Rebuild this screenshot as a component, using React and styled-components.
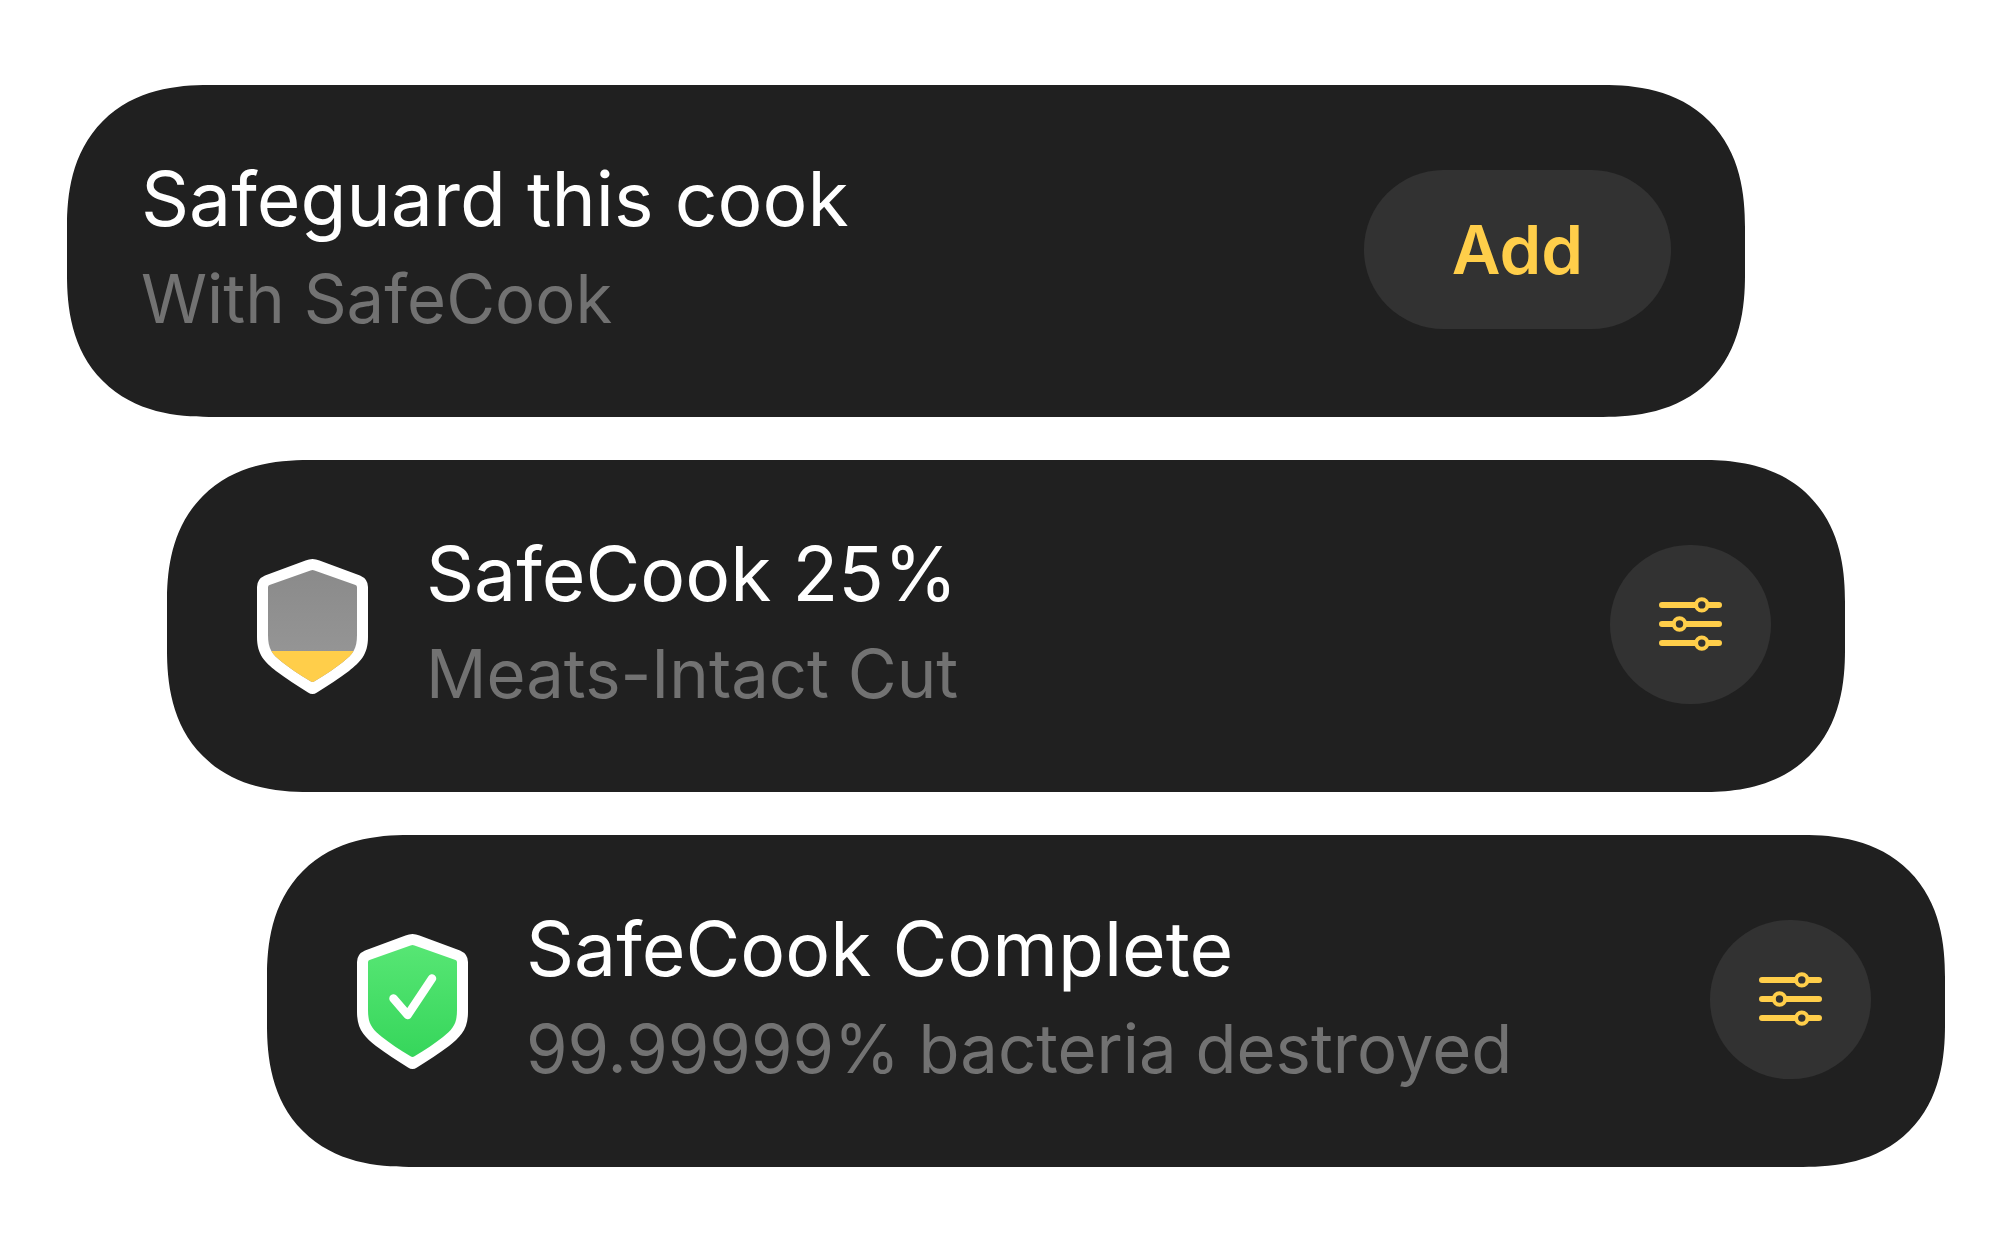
import React from "react";
import styled, { createGlobalStyle } from "styled-components";

const GlobalStyle = createGlobalStyle`
  body {
    margin: 0;
    background: #ffffff;
    font-family: Inter, "Liberation Sans", sans-serif;
  }
`;

const ShieldProgress = () => (
  <svg width="111" height="136" viewBox="0 0 111 136" aria-hidden="true">
    <defs>
      <linearGradient id="grayFill" x1="0" y1="0" x2="0" y2="1">
        <stop offset="0" stopColor="#898989" />
        <stop offset="1" stopColor="#9a9a9a" />
      </linearGradient>
      <clipPath id="shieldInner">
        <path d={INNER} />
      </clipPath>
    </defs>
    <path d={OUTER} fill="#ffffff" />
    <g clipPath="url(#shieldInner)">
      <rect width="111" height="136" fill="url(#grayFill)" />
      <rect y="92" width="111" height="44" fill="#ffce4a" />
    </g>
  </svg>
);

const ShieldDone = () => (
  <svg width="111" height="136" viewBox="0 0 111 136" aria-hidden="true">
    <defs>
      <linearGradient id="greenFill" x1="0" y1="0" x2="0" y2="1">
        <stop offset="0" stopColor="#57e674" />
        <stop offset="1" stopColor="#36d65b" />
      </linearGradient>
    </defs>
    <path d={OUTER} fill="#ffffff" />
    <path d={INNER} fill="url(#greenFill)" />
    <path
      d="M36.5 64.5L50.7 81L75 44.5"
      fill="none"
      stroke="#ffffff"
      strokeWidth="8.5"
      strokeLinecap="round"
      strokeLinejoin="round"
    />
  </svg>
);

const SlidersIcon = () => (
  <svg width="63" height="54" viewBox="0 0 63 54" fill="none" stroke="#ffce4a" aria-hidden="true">
    <path
      d="M3 7.9H37M49 7.9H60M3 27H14.5M26.5 27H60M3 46.1H37M49 46.1H60"
      strokeWidth="6"
      strokeLinecap="round"
    />
    <g strokeWidth="4" fill="#323232">
      <circle cx="42.8" cy="7.9" r="5.7" />
      <circle cx="20.5" cy="27" r="5.7" />
      <circle cx="42.8" cy="46.1" r="5.7" />
    </g>
  </svg>
);

const OUTER =
  "M48.5 1.5Q55.5 -1.5 62.5 1.5L103 16.5Q111 20 111 28V78C111 96 103 103 92 112C82 119.5 71 126.5 60 133.5Q55.5 136.5 51 133.5C40 126.5 29 119.5 19 112C8 103 0 96 0 78V28Q0 20 8 16.5Z";

const INNER =
  "M53.5 11.4Q55.5 10.6 57.5 11.4L98.5 26Q100 26.6 100 28.2V76C100 90 96 95 86 103C78 109.5 68 116 57.5 122.3Q55.5 123.5 53.5 122.3C43 116 33 109.5 25 103C15 95 11 90 11 76V28.2Q11 26.6 12.5 26Z";

const cards = [
  { title: "Safeguard this cook", sub: "With SafeCook" },
  { title: "SafeCook 25%", sub: "Meats-Intact Cut", icon: <ShieldProgress /> },
  { title: "SafeCook Complete", sub: "99.99999% bacteria destroyed", icon: <ShieldDone /> },
];

const App = () => {
  return (
    <>
      <GlobalStyle />
      <Page>
        {cards.map((card, i) => (
          <Card key={card.title} $step={i} $last={cards.length - 1}>
            {card.icon && <IconBox>{card.icon}</IconBox>}
            <Texts>
              <Title>{card.title}</Title>
              <Sub>{card.sub}</Sub>
            </Texts>
            {card.icon ? (
              <RoundButton type="button" aria-label={`${card.title} settings`}>
                <SlidersIcon />
              </RoundButton>
            ) : (
              <AddButton type="button">Add</AddButton>
            )}
          </Card>
        ))}
      </Page>
    </>
  );
};

export default App;

const Page = styled.main`
  display: flex;
  flex-direction: column;
  gap: 43px;
  padding: 85px 55px 80px 67px;
`;

const Card = styled.section`
  display: flex;
  align-items: center;
  box-sizing: border-box;
  min-height: 332px;
  margin-left: ${(p) => p.$step * 5}vw;
  margin-right: ${(p) => (p.$last - p.$step) * 5}vw;
  padding: 0 74px;
  background: #202020;
  border-radius: 124px;

  @supports (corner-shape: superellipse(1.25)) {
    border-radius: 142px;
    corner-shape: superellipse(1.25);
  }
`;

const IconBox = styled.div`
  display: flex;
  margin: 2px 58px 0 16px;
`;

const Texts = styled.div`
  flex: 1;
  padding-bottom: 4px;
`;

const Title = styled.h2`
  margin: 0;
  color: #ffffff;
  font-size: 75px;
  font-weight: 400;
  line-height: 100px;
`;

const Sub = styled.p`
  margin: 0;
  color: #727272;
  font-size: 67px;
  font-weight: 400;
  line-height: 100px;
`;

const Button = styled.button`
  display: flex;
  align-items: center;
  justify-content: center;
  height: 159px;
  margin-bottom: 4px;
  padding: 0;
  border: none;
  border-radius: 80px;
  background: #323232;
  cursor: pointer;
`;

const AddButton = styled(Button)`
  width: 307px;
  color: #ffce4a;
  font-family: inherit;
  font-size: 67px;
  font-weight: 600;
`;

const RoundButton = styled(Button)`
  width: 161px;
`;
